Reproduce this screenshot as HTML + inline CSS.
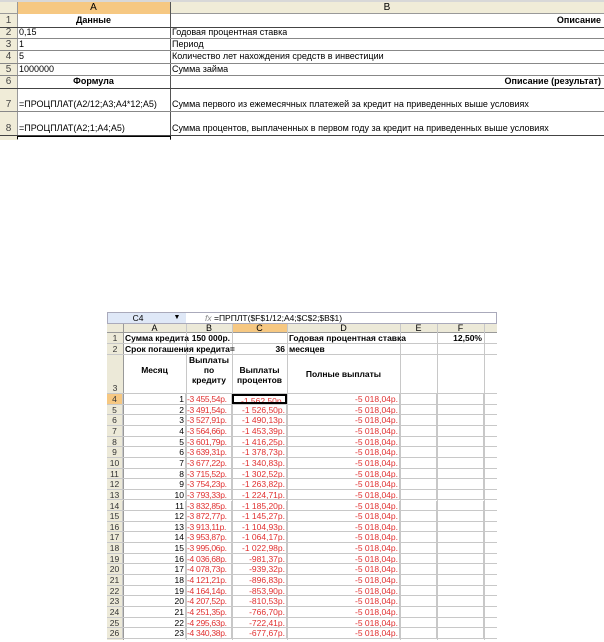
<!DOCTYPE html>
<html><head><meta charset="utf-8">
<style>
*{margin:0;padding:0;box-sizing:border-box}
body{width:604px;height:642px;background:#fff;position:relative;overflow:hidden;font-family:"Liberation Sans",Arial,sans-serif;font-size:9px;color:#000}
.a{position:absolute;white-space:nowrap;overflow:hidden}
.hl{position:absolute;height:1px;background:#b8b8b8}
.vl{position:absolute;width:1px;background:#b8b8b8}
.b{font-weight:bold}
.r{text-align:right}
.c{text-align:center}
.row{position:absolute;left:107px;width:390px;height:10.65px;border-bottom:1px solid #c8c8c8;font-size:8.5px;line-height:10px;white-space:nowrap}
.row div{position:absolute;top:0;height:100%;border-right:1px solid #c8c8c8;padding:0 1px;white-space:nowrap;overflow:hidden}
.rh{left:0;width:16px;background:#ece9d8;text-align:center;color:#333}
.ca{left:16px;width:63px;text-align:right}
.cb{left:79px;width:46px;color:#e03030;text-align:left;letter-spacing:-0.3px}
.cc{left:125px;width:55px;color:#e03030;text-align:right}
.cd{left:180px;width:113px;color:#e03030;text-align:right}
.ce{left:293px;width:37px}
.cf{left:330px;width:47px}
.cg{left:377px;width:13px;border-right:none!important}
</style></head><body>

<!-- TOP SHEET -->
<div class="a" style="left:0;top:0;width:604px;height:2px;background:#d8d8d8"></div>
<div class="a" style="left:0;top:2px;width:604px;height:12px;background:#f0ecd8;border-bottom:1px solid #999"></div>
<div class="a c" style="left:17px;top:2px;width:153px;height:12px;background:#f6c882;line-height:12px;font-size:10px">A</div>
<div class="a c" style="left:170px;top:2px;width:434px;height:12px;line-height:12px;font-size:10px">B</div>
<div class="a" style="left:0;top:14px;width:17px;height:126px;background:#f0ecd8"></div>
<div class="vl" style="left:17px;top:2px;height:138px;background:#999"></div>
<div class="vl" style="left:170px;top:2px;height:138px;background:#555"></div>

<div class="hl" style="left:0;top:27px;width:604px;background:#444"></div>
<div class="hl" style="left:0;top:38px;width:604px;background:#888"></div>
<div class="hl" style="left:0;top:50px;width:604px;background:#888"></div>
<div class="hl" style="left:0;top:63px;width:604px;background:#888"></div>
<div class="hl" style="left:0;top:75px;width:604px;background:#888"></div>
<div class="hl" style="left:0;top:88px;width:604px;background:#444"></div>
<div class="hl" style="left:0;top:111px;width:604px;background:#888"></div>
<div class="hl" style="left:0;top:135px;width:604px;background:#444"></div>

<div class="a" style="left:0;top:15px;width:17px;font-size:10px;text-align:center;color:#444">1</div>
<div class="a" style="left:0;top:27px;width:17px;font-size:10px;text-align:center;color:#444">2</div>
<div class="a" style="left:0;top:39px;width:17px;font-size:10px;text-align:center;color:#444">3</div>
<div class="a" style="left:0;top:51px;width:17px;font-size:10px;text-align:center;color:#444">4</div>
<div class="a" style="left:0;top:64px;width:17px;font-size:10px;text-align:center;color:#444">5</div>
<div class="a" style="left:0;top:76px;width:17px;font-size:10px;text-align:center;color:#444">6</div>
<div class="a" style="left:0;top:99px;width:17px;font-size:10px;text-align:center;color:#444">7</div>
<div class="a" style="left:0;top:123px;width:17px;font-size:10px;text-align:center;color:#444">8</div>

<div class="a b c" style="left:17px;top:15px;width:153px">Данные</div>
<div class="a b r" style="left:170px;top:15px;width:431px">Описание</div>
<div class="a" style="left:19px;top:27px">0,15</div>
<div class="a" style="left:172px;top:27px">Годовая процентная ставка</div>
<div class="a" style="left:19px;top:39px">1</div>
<div class="a" style="left:172px;top:39px">Период</div>
<div class="a" style="left:19px;top:51px">5</div>
<div class="a" style="left:172px;top:51px">Количество лет нахождения средств в инвестиции</div>
<div class="a" style="left:19px;top:64px">1000000</div>
<div class="a" style="left:172px;top:64px">Сумма займа</div>
<div class="a b c" style="left:17px;top:76px;width:153px">Формула</div>
<div class="a b r" style="left:170px;top:76px;width:431px">Описание (результат)</div>
<div class="a" style="left:19px;top:99px">=ПРОЦПЛАТ(A2/12;A3;A4*12;A5)</div>
<div class="a" style="left:172px;top:99px">Сумма первого из ежемесячных платежей за кредит на приведенных выше условиях</div>
<div class="a" style="left:19px;top:123px">=ПРОЦПЛАТ(A2;1;A4;A5)</div>
<div class="a" style="left:172px;top:123px">Сумма процентов, выплаченных в первом году за кредит на приведенных выше условиях</div>
<div class="a" style="left:17px;top:136px;width:154px;height:3px;border:1px solid #000;border-bottom:none"></div>

<!-- BOTTOM SHEET -->
<div class="a" style="left:107px;top:312px;width:390px;height:12px;background:#fff;border:1px solid #aab;font-size:8.5px;line-height:10px"></div>
<div class="a c" style="left:108px;top:313px;width:60px;height:10px;background:#dfe8f7;font-size:8.5px;line-height:10px">C4</div>
<div class="a c" style="left:168px;top:313px;width:18px;height:10px;background:#dfe8f7;font-size:7px;line-height:10px">▼</div>
<div class="a" style="left:205px;top:313px;font-size:8.5px;line-height:10px"><i style="color:#888">fx</i> =ПРПЛТ($F$1/12;A4;$C$2;$B$1)</div>

<div class="a" style="left:107px;top:324px;width:390px;height:9px;background:#ece9d8;border-bottom:1px solid #999;font-size:9px;line-height:9px">
<span class="a c" style="left:16px;width:63px">A</span>
<span class="a c" style="left:79px;width:46px">B</span>
<span class="a c" style="left:125px;width:55px;background:#f6c882;height:9px">C</span>
<span class="a c" style="left:180px;width:113px">D</span>
<span class="a c" style="left:293px;width:37px">E</span>
<span class="a c" style="left:330px;width:47px">F</span>
</div>
<div class="vl" style="left:123px;top:324px;height:316px;background:#999"></div>
<div class="vl" style="left:186px;top:324px;height:316px;background:#c8c8c8"></div>
<div class="vl" style="left:232px;top:324px;height:316px;background:#c8c8c8"></div>
<div class="vl" style="left:287px;top:324px;height:316px;background:#c8c8c8"></div>
<div class="vl" style="left:400px;top:324px;height:316px;background:#c8c8c8"></div>
<div class="vl" style="left:437px;top:324px;height:316px;background:#c8c8c8"></div>
<div class="vl" style="left:484px;top:324px;height:316px;background:#c8c8c8"></div>
<div class="a" style="left:107px;top:333px;width:16px;height:307px;background:#ece9d8"></div>

<div class="a" style="left:107px;top:333px;width:390px;height:11px;border-bottom:1px solid #c8c8c8;font-size:8.5px;line-height:11px">
<span class="a c" style="left:0;width:16px;color:#333">1</span>
<span class="a b" style="left:18px">Сумма кредита</span>
<span class="a b r" style="left:79px;width:44px">150 000р.</span>
<span class="a b" style="left:182px">Годовая процентная ставка</span>
<span class="a b r" style="left:330px;width:45px">12,50%</span>
</div>
<div class="a" style="left:107px;top:344px;width:390px;height:11px;border-bottom:1px solid #c8c8c8;font-size:8.5px;line-height:11px">
<span class="a c" style="left:0;width:16px;color:#333">2</span>
<span class="a b" style="left:18px">Срок погашения кредита=</span>
<span class="a b r" style="left:125px;width:53px">36</span>
<span class="a b" style="left:182px">месяцев</span>
</div>
<div class="a" style="left:107px;top:355px;width:390px;height:39px;border-bottom:1px solid #c8c8c8;font-size:8.5px;line-height:10px">
<span class="a c" style="left:0;width:16px;top:28px;color:#333">3</span>
<span class="a b c" style="left:16px;width:63px;top:10px">Месяц</span>
<span class="a b c" style="left:79px;width:46px;top:0">Выплаты<br>по<br>кредиту</span>
<span class="a b c" style="left:125px;width:55px;top:10px">Выплаты<br>процентов</span>
<span class="a b c" style="left:180px;width:113px;top:14px">Полные выплаты</span>
</div>

<div class="row" style="top:394px"><div class="rh" style="background:#f6c882">4</div><div class="ca">1</div><div class="cb">-3 455,54р.</div><div class="cc" style="border:2px solid #000">-1 562,50р.</div><div class="cd">-5 018,04р.</div><div class="ce"></div><div class="cf"></div><div class="cg"></div></div>
<div class="row" style="top:404.65px"><div class="rh">5</div><div class="ca">2</div><div class="cb">-3 491,54р.</div><div class="cc">-1 526,50р.</div><div class="cd">-5 018,04р.</div><div class="ce"></div><div class="cf"></div><div class="cg"></div></div>
<div class="row" style="top:415.3px"><div class="rh">6</div><div class="ca">3</div><div class="cb">-3 527,91р.</div><div class="cc">-1 490,13р.</div><div class="cd">-5 018,04р.</div><div class="ce"></div><div class="cf"></div><div class="cg"></div></div>
<div class="row" style="top:425.95px"><div class="rh">7</div><div class="ca">4</div><div class="cb">-3 564,66р.</div><div class="cc">-1 453,39р.</div><div class="cd">-5 018,04р.</div><div class="ce"></div><div class="cf"></div><div class="cg"></div></div>
<div class="row" style="top:436.6px"><div class="rh">8</div><div class="ca">5</div><div class="cb">-3 601,79р.</div><div class="cc">-1 416,25р.</div><div class="cd">-5 018,04р.</div><div class="ce"></div><div class="cf"></div><div class="cg"></div></div>
<div class="row" style="top:447.25px"><div class="rh">9</div><div class="ca">6</div><div class="cb">-3 639,31р.</div><div class="cc">-1 378,73р.</div><div class="cd">-5 018,04р.</div><div class="ce"></div><div class="cf"></div><div class="cg"></div></div>
<div class="row" style="top:457.9px"><div class="rh">10</div><div class="ca">7</div><div class="cb">-3 677,22р.</div><div class="cc">-1 340,83р.</div><div class="cd">-5 018,04р.</div><div class="ce"></div><div class="cf"></div><div class="cg"></div></div>
<div class="row" style="top:468.55px"><div class="rh">11</div><div class="ca">8</div><div class="cb">-3 715,52р.</div><div class="cc">-1 302,52р.</div><div class="cd">-5 018,04р.</div><div class="ce"></div><div class="cf"></div><div class="cg"></div></div>
<div class="row" style="top:479.2px"><div class="rh">12</div><div class="ca">9</div><div class="cb">-3 754,23р.</div><div class="cc">-1 263,82р.</div><div class="cd">-5 018,04р.</div><div class="ce"></div><div class="cf"></div><div class="cg"></div></div>
<div class="row" style="top:489.85px"><div class="rh">13</div><div class="ca">10</div><div class="cb">-3 793,33р.</div><div class="cc">-1 224,71р.</div><div class="cd">-5 018,04р.</div><div class="ce"></div><div class="cf"></div><div class="cg"></div></div>
<div class="row" style="top:500.5px"><div class="rh">14</div><div class="ca">11</div><div class="cb">-3 832,85р.</div><div class="cc">-1 185,20р.</div><div class="cd">-5 018,04р.</div><div class="ce"></div><div class="cf"></div><div class="cg"></div></div>
<div class="row" style="top:511.15px"><div class="rh">15</div><div class="ca">12</div><div class="cb">-3 872,77р.</div><div class="cc">-1 145,27р.</div><div class="cd">-5 018,04р.</div><div class="ce"></div><div class="cf"></div><div class="cg"></div></div>
<div class="row" style="top:521.8px"><div class="rh">16</div><div class="ca">13</div><div class="cb">-3 913,11р.</div><div class="cc">-1 104,93р.</div><div class="cd">-5 018,04р.</div><div class="ce"></div><div class="cf"></div><div class="cg"></div></div>
<div class="row" style="top:532.45px"><div class="rh">17</div><div class="ca">14</div><div class="cb">-3 953,87р.</div><div class="cc">-1 064,17р.</div><div class="cd">-5 018,04р.</div><div class="ce"></div><div class="cf"></div><div class="cg"></div></div>
<div class="row" style="top:543.1px"><div class="rh">18</div><div class="ca">15</div><div class="cb">-3 995,06р.</div><div class="cc">-1 022,98р.</div><div class="cd">-5 018,04р.</div><div class="ce"></div><div class="cf"></div><div class="cg"></div></div>
<div class="row" style="top:553.75px"><div class="rh">19</div><div class="ca">16</div><div class="cb">-4 036,68р.</div><div class="cc">-981,37р.</div><div class="cd">-5 018,04р.</div><div class="ce"></div><div class="cf"></div><div class="cg"></div></div>
<div class="row" style="top:564.4px"><div class="rh">20</div><div class="ca">17</div><div class="cb">-4 078,73р.</div><div class="cc">-939,32р.</div><div class="cd">-5 018,04р.</div><div class="ce"></div><div class="cf"></div><div class="cg"></div></div>
<div class="row" style="top:575.05px"><div class="rh">21</div><div class="ca">18</div><div class="cb">-4 121,21р.</div><div class="cc">-896,83р.</div><div class="cd">-5 018,04р.</div><div class="ce"></div><div class="cf"></div><div class="cg"></div></div>
<div class="row" style="top:585.7px"><div class="rh">22</div><div class="ca">19</div><div class="cb">-4 164,14р.</div><div class="cc">-853,90р.</div><div class="cd">-5 018,04р.</div><div class="ce"></div><div class="cf"></div><div class="cg"></div></div>
<div class="row" style="top:596.35px"><div class="rh">23</div><div class="ca">20</div><div class="cb">-4 207,52р.</div><div class="cc">-810,53р.</div><div class="cd">-5 018,04р.</div><div class="ce"></div><div class="cf"></div><div class="cg"></div></div>
<div class="row" style="top:607px"><div class="rh">24</div><div class="ca">21</div><div class="cb">-4 251,35р.</div><div class="cc">-766,70р.</div><div class="cd">-5 018,04р.</div><div class="ce"></div><div class="cf"></div><div class="cg"></div></div>
<div class="row" style="top:617.65px"><div class="rh">25</div><div class="ca">22</div><div class="cb">-4 295,63р.</div><div class="cc">-722,41р.</div><div class="cd">-5 018,04р.</div><div class="ce"></div><div class="cf"></div><div class="cg"></div></div>
<div class="row" style="top:628.3px"><div class="rh">26</div><div class="ca">23</div><div class="cb">-4 340,38р.</div><div class="cc">-677,67р.</div><div class="cd">-5 018,04р.</div><div class="ce"></div><div class="cf"></div><div class="cg"></div></div>
</body></html>
